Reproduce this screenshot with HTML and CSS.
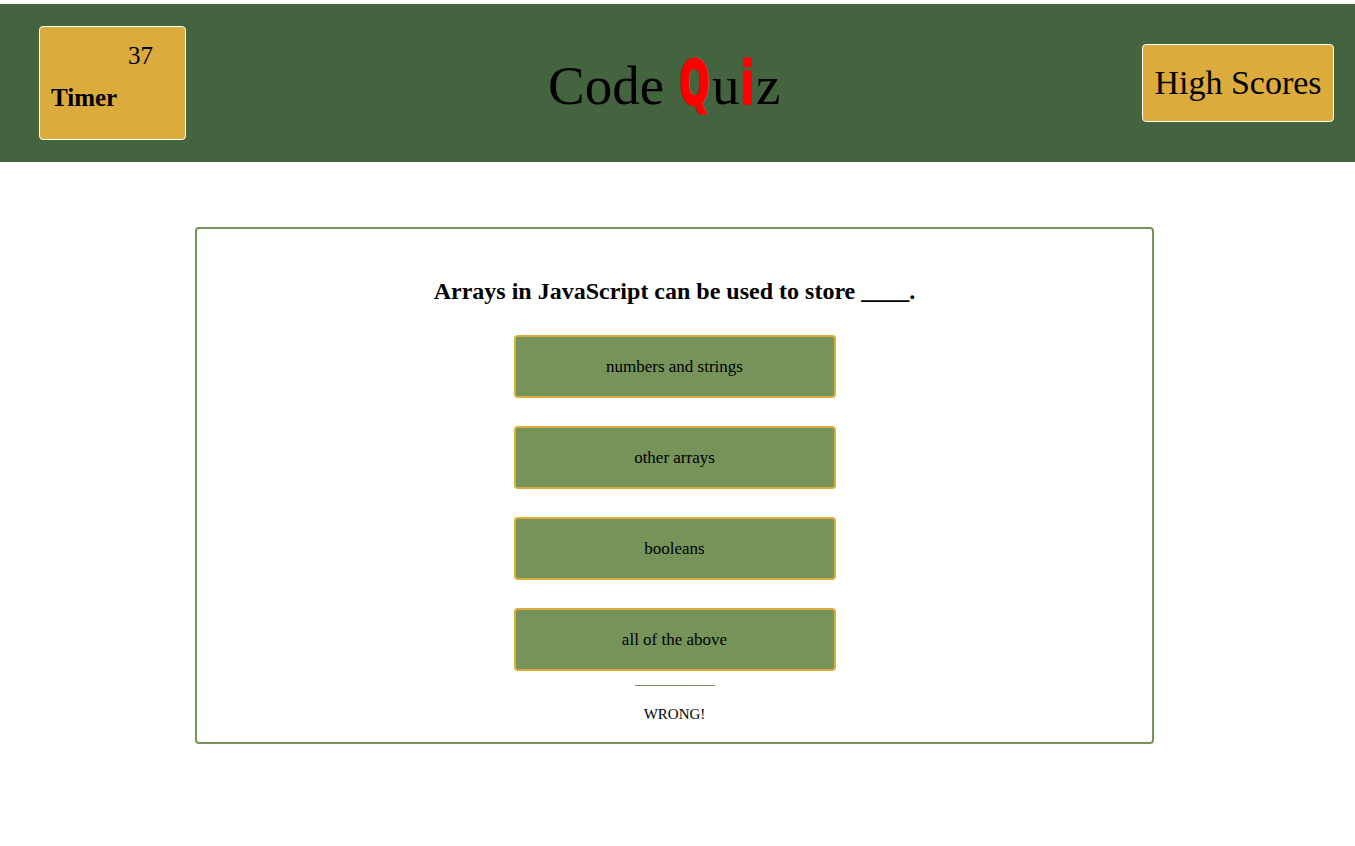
FILE: index.html
```html
<!DOCTYPE html>
<html>
<head>
<meta charset="utf-8">
<link rel="stylesheet" href="styles.css">
</head>
<body>
<header class="header">
  <div class="timer">
    <span class="timer-count">37</span>
    <span class="timer-label">Timer</span>
  </div>
  <h1 class="title">Code <span class="accent accent-q">Q</span>u<span class="accent accent-i">i</span>z</h1>
  <button class="scores-btn">High Scores</button>
</header>
<main class="card">
  <h2 class="question">Arrays in JavaScript can be used to store ____.</h2>
  <div class="answers">
    <button class="answer">numbers and strings</button>
    <button class="answer">other arrays</button>
    <button class="answer">booleans</button>
    <button class="answer">all of the above</button>
  </div>
  <hr class="divider">
  <p class="result">WRONG!</p>
</main>
</body>
</html>
```
FILE: styles.css
```css
html, body {
  margin: 0;
  padding: 0;
  background: #ffffff;
  font-family: "Liberation Serif", "DejaVu Serif", serif;
  color: #000;
}

.header {
  margin-top: 4px;
  height: 158px;
  background: #44633f;
  display: flex;
  align-items: center;
  justify-content: space-between;
  padding: 0 21px 0 39px;
  box-sizing: border-box;
}

.timer {
  width: 147px;
  height: 114px;
  box-sizing: border-box;
  background: #dbab3b;
  border: 1px solid #ffffff;
  border-radius: 4px;
  display: flex;
  flex-direction: column;
  padding: 14px 0 0 11px;
  align-self: flex-start;
  margin-top: 22px;
}

.timer-count {
  font-size: 25px;
  padding-left: 77px;
  line-height: 30px;
}

.timer-label {
  font-size: 25px;
  font-weight: bold;
  margin-top: 13px;
  line-height: 28px;
}

.title {
  margin: 0;
  font-weight: normal;
  font-size: 55px;
  line-height: 1;
  width: 232px;
  white-space: nowrap;
  text-align: center;
  margin-top: 4px;
}

.accent {
  display: inline-block;
  color: #ff0000;
  font-family: "DejaVu Sans", "Liberation Sans", sans-serif;
  font-weight: bold;
  font-size: 60px;
  line-height: 0.8;
  transform: scaleX(0.58);
}

.accent-q {
  margin: 0 -8px 0 -9px;
  -webkit-text-stroke: 3px #ff0000;
}

.accent-i {
  margin: 0 -2px 0 -2px;
  transform: scaleX(0.75);
  -webkit-text-stroke: 1px #ff0000;
}

.scores-btn {
  width: 192px;
  height: 78px;
  box-sizing: border-box;
  background: #dbab3b;
  border: 1px solid #ffffff;
  border-radius: 4px;
  font-family: "Liberation Serif", "DejaVu Serif", serif;
  font-size: 34px;
  color: #000;
  padding: 0;
  align-self: flex-start;
  margin-top: 40px;
}

.card {
  margin: 65px 0 0 195px;
  width: 959px;
  height: 517px;
  box-sizing: border-box;
  border: 2px solid #76935a;
  border-radius: 4px;
  display: flex;
  flex-direction: column;
  align-items: center;
  padding-top: 47px;
}

.question {
  margin: 0;
  font-size: 24px;
  font-weight: bold;
  line-height: 30px;
}

.answers {
  display: flex;
  flex-direction: column;
  gap: 28px;
  margin-top: 29px;
}

.answer {
  width: 322px;
  height: 63px;
  box-sizing: border-box;
  background: #76935a;
  border: 2px solid #dbab3b;
  border-radius: 4px;
  font-family: "Liberation Serif", "DejaVu Serif", serif;
  font-size: 17px;
  color: #000;
  padding: 0;
}

.divider {
  width: 80px;
  margin: 14px 0 0;
  border: none;
  border-top: 1px solid #76935a;
  height: 0;
}

.result {
  margin: 20px 0 0;
  font-size: 15px;
}
```
